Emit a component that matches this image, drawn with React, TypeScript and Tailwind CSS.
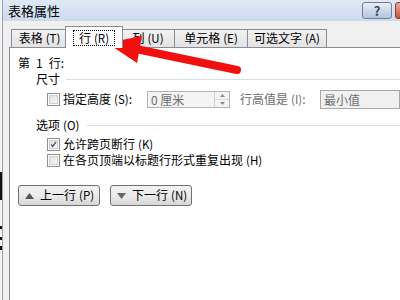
import React from 'react';

const font = { fontFamily: '"Noto Sans CJK SC", "Liberation Sans", sans-serif' };

const tabs = [
  { label: '表格', key: 'T', width: 'w-[56px]' },
  { label: '行', key: 'R', width: 'w-[58px]', active: true },
  { label: '列', key: 'U', width: 'w-[53px]' },
  { label: '单元格', key: 'E', width: 'w-[73px]' },
  { label: '可选文字', key: 'A', width: 'w-[80px]' },
];

function Key({ k }: { k: string }) {
  return <span className="ml-[3px] text-[11.5px]">({k})</span>;
}

function Checkbox({ checked = false }: { checked?: boolean }) {
  return (
    <span className="flex h-[13px] w-[13px] shrink-0 items-center justify-center border border-[#8e8f8f] bg-white">
      <span className="flex h-[9px] w-[9px] items-center justify-center border border-[#cfcfcf] bg-gradient-to-br from-[#e0e0e0] to-[#f8f8f8]">
        {checked && (
          <svg width="9" height="9" viewBox="0 0 9 9">
            <path d="M1.5 4.5 L3.5 7 L7.8 1.2" fill="none" stroke="#3a4f8a" strokeWidth="1.6" />
          </svg>
        )}
      </span>
    </span>
  );
}

function Section({ title, k, lineGap }: { title: string; k: string; lineGap: string }) {
  return (
    <div className="ml-[18px] flex h-[16px] items-center">
      <span>
        {title}
        {k && <Key k={k} />}
      </span>
      <span className={`${lineGap} h-px flex-1 bg-[#d5dfe5]`} />
    </div>
  );
}

function NavButton({ up, label, k }: { up: boolean; label: string; k: string }) {
  return (
    <button className="flex h-[21px] w-[82px] items-center gap-[6px] rounded-[3px] border border-[#707070] bg-gradient-to-b from-[#f2f2f2] via-[#ebebeb] to-[#d6d6d6] pl-[6px] text-[12px] text-black">
      <svg width="9" height="6" viewBox="0 0 9 6">
        {up ? <path d="M0 6 L4.5 0 L9 6 Z" fill="#555" /> : <path d="M0 0 L9 0 L4.5 6 Z" fill="#666" />}
      </svg>
      <span>
        {label}
        <Key k={k} />
      </span>
    </button>
  );
}

export default function App() {
  return (
    <div className="relative flex h-[300px] w-[400px] overflow-hidden bg-white text-[12px] text-black" style={font}>
      {/* window behind the dialog */}
      <div className="flex w-[3px] shrink-0 flex-col border-r border-[#9aa0a8] bg-[#f4f4f4]">
        <div className="h-[172px]" />
        <div className="h-[28px] w-[2px] bg-[#111]" />
        <div className="h-[26px]" />
        <div className="h-[3px] w-[2px] bg-[#111]" />
        <div className="h-[8px]" />
        <div className="h-[3px] w-[2px] bg-[#111]" />
        <div className="h-[6px]" />
        <div className="h-[4px] w-[2px] bg-[#111]" />
      </div>

      <div className="flex min-w-0 flex-1 flex-col">
        {/* title bar */}
        <div className="flex h-[21px] shrink-0 items-center bg-gradient-to-b from-[#dfe9f5] to-[#cbdaed] pl-[5px]">
          <span className="text-[13px] leading-none">表格属性</span>
          <div className="ml-auto -mr-[15px] flex items-start gap-[3px] self-start pt-[2px]">
            <div className="flex h-[17px] w-[30px] items-center justify-center rounded-[3px] border border-[#6f7f97] bg-gradient-to-b from-[#e8eef7] via-[#cdd9ea] to-[#b4c6df] text-[13px] font-bold leading-none text-[#3c4a5e]">
              ?
            </div>
            <div className="h-[17px] w-[20px] rounded-l-[3px] border border-[#8a3a30] bg-gradient-to-b from-[#e9a99c] to-[#c8513f]" />
          </div>
        </div>

        {/* dialog body */}
        <div className="flex flex-1 flex-col bg-[#f0f0f0] pl-[6px] pt-[6px]">
          <div className="flex h-[20px] items-end pl-[2px]">
            {tabs.map((t) =>
              t.active ? (
                <div
                  key={t.key}
                  className={`${t.width} relative z-10 -mx-[2px] -mb-px flex h-[22px] shrink-0 items-center justify-center border border-b-0 border-[#898c95] bg-white`}
                >
                  <span className="border border-dotted border-black px-[5px] leading-[13px]">
                    {t.label}
                    <Key k={t.key} />
                  </span>
                </div>
              ) : (
                <div
                  key={t.key}
                  className={`${t.width} flex h-[18px] shrink-0 items-center justify-center border border-b-0 border-r-0 border-[#898c95] bg-gradient-to-b from-[#f2f2f2] to-[#e3e3e3] last:border-r`}
                >
                  <span>
                    {t.label}
                    <Key k={t.key} />
                  </span>
                </div>
              ),
            )}
          </div>

          {/* panel */}
          <div className="flex flex-1 flex-col border-l border-t border-[#898c95] bg-white pl-[8px] pt-[7px]">
            <div className="flex h-[16px] items-center gap-[6px]">
              <span>第</span>
              <span>1</span>
              <span>行:</span>
            </div>
            <Section title="尺寸" k="" lineGap="ml-[6px]" />

            <div className="mt-[4px] flex h-[17px] items-center">
              <span className="ml-[29px]">
                <Checkbox />
              </span>
              <span className="ml-[3px] w-[84px]">
                指定高度
                <Key k="S" />:
              </span>
              <div className="flex h-[17px] w-[83px] items-center border border-[#b4b4b4] bg-[#f4f4f4]">
                <span className="flex-1 pl-[3px] text-[#6d6d6d]">0 厘米</span>
                <div className="flex h-[15px] w-[15px] flex-col border-l border-[#cfcfcf]">
                  <div className="flex flex-1 items-center justify-center border-b border-[#d8d8d8]">
                    <svg width="5" height="3" viewBox="0 0 5 3">
                      <path d="M0 3 L2.5 0 L5 3 Z" fill="#8a8a8a" />
                    </svg>
                  </div>
                  <div className="flex flex-1 items-center justify-center">
                    <svg width="5" height="3" viewBox="0 0 5 3">
                      <path d="M0 0 L5 0 L2.5 3 Z" fill="#8a8a8a" />
                    </svg>
                  </div>
                </div>
              </div>
              <span className="ml-[10px] w-[80px] text-[#6d6d6d]">
                行高值是
                <Key k="I" />:
              </span>
              <div className="flex h-[19px] flex-1 items-center border border-[#a8a8a8] bg-[#f0f0f0] pl-[3px] text-[#6d6d6d]">
                最小值
              </div>
            </div>

            <div className="mt-[9px]">
              <Section title="选项" k="O" lineGap="ml-[8px]" />
            </div>

            <div className="mt-[3px] flex h-[16px] items-center">
              <span className="ml-[29px]">
                <Checkbox checked />
              </span>
              <span className="ml-[3px]">
                允许跨页断行
                <Key k="K" />
              </span>
            </div>
            <div className="flex h-[16px] items-center">
              <span className="ml-[29px]">
                <Checkbox />
              </span>
              <span className="ml-[3px]">
                在各页顶端以标题行形式重复出现
                <Key k="H" />
              </span>
            </div>

            <div className="mt-[17px] flex gap-[10px]">
              <NavButton up label="上一行" k="P" />
              <NavButton up={false} label="下一行" k="N" />
            </div>
          </div>
        </div>
      </div>

      {/* red annotation arrow */}
      <svg className="pointer-events-none absolute left-0 top-0" width="400" height="300" viewBox="0 0 400 300">
        <line x1="136" y1="49" x2="237" y2="70" stroke="#f01010" strokeWidth="8" strokeLinecap="round" />
        <path d="M107 43 L142 36 L137 63 Z" fill="#f01010" />
      </svg>
    </div>
  );
}
